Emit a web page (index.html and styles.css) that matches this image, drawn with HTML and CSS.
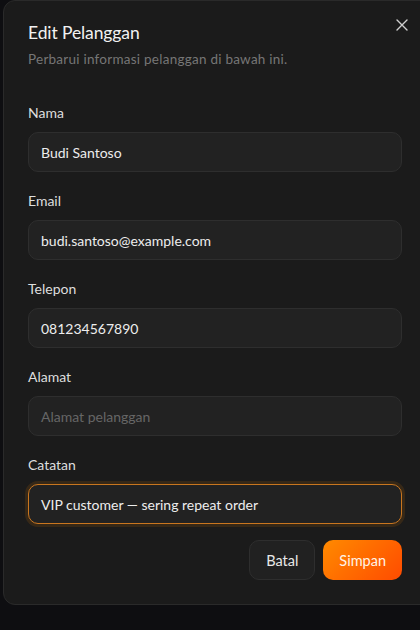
FILE: index.html
```html
<!DOCTYPE html>
<html lang="id">
<head>
<meta charset="utf-8">
<title>Edit Pelanggan</title>
<link rel="stylesheet" href="styles.css">
</head>
<body>
<div class="dialog">
  <button class="close" aria-label="Tutup">
    <svg width="12" height="12" viewBox="0 0 12 12"><path d="M1 1L11 11M11 1L1 11" stroke="#cfcfcf" stroke-width="1.4" stroke-linecap="round"/></svg>
  </button>
  <div class="header">
    <h2 class="title">Edit Pelanggan</h2>
    <p class="subtitle">Perbarui informasi pelanggan di bawah ini.</p>
  </div>
  <form class="form">
    <div class="field">
      <label class="label">Nama</label>
      <div class="input">Budi Santoso</div>
    </div>
    <div class="field">
      <label class="label">Email</label>
      <div class="input">budi.santoso@example.com</div>
    </div>
    <div class="field">
      <label class="label">Telepon</label>
      <div class="input">081234567890</div>
    </div>
    <div class="field">
      <label class="label">Alamat</label>
      <div class="input placeholder">Alamat pelanggan</div>
    </div>
    <div class="field">
      <label class="label">Catatan</label>
      <div class="input focused">VIP customer — sering repeat order</div>
    </div>
    <div class="actions">
      <button type="button" class="btn secondary">Batal</button>
      <button type="button" class="btn primary">Simpan</button>
    </div>
  </form>
</div>
</body>
</html>
```
FILE: styles.css
```css
html, body {
  margin: 0;
  padding: 0;
}
body {
  background: #0e0e11;
  width: 420px;
  height: 630px;
  overflow: hidden;
  font-family: "Lato", "Inter", sans-serif;
  color: #e6e6e6;
}
.dialog {
  position: relative;
  box-sizing: border-box;
  margin-left: 3px;
  width: 440px;
  height: 605px;
  background: #1b1b1b;
  border: 1px solid #2a2a2a;
  border-radius: 12px;
  padding: 20px 40px 24px 24px;
}
.close {
  position: absolute;
  top: 17px;
  right: 33px;
  width: 14px;
  height: 14px;
  padding: 0;
  border: 0;
  background: none;
  display: flex;
  align-items: center;
  justify-content: center;
}
.header {
  margin-bottom: 35px;
}
.title {
  margin: 0;
  font-size: 17.5px;
  line-height: 24px;
  font-weight: 400;
  letter-spacing: -0.1px;
  color: #f2f2f2;
}
.subtitle {
  margin: 5px 0 0;
  font-size: 13.5px;
  line-height: 18px;
  letter-spacing: 0.25px;
  color: #767676;
}
.form {
  display: flex;
  flex-direction: column;
  gap: 19px;
}
.field {
  display: flex;
  flex-direction: column;
  gap: 9px;
}
.label {
  font-size: 14px;
  line-height: 20px;
  color: #dedede;
}
.input {
  box-sizing: border-box;
  height: 40px;
  display: flex;
  align-items: center;
  padding: 0 12px;
  background: #222222;
  border: 1px solid #2e2e2e;
  border-radius: 10px;
  font-size: 14px;
  color: #ededed;
}
.input.placeholder {
  color: #666666;
}
.input.focused {
  border-color: #c9761f;
  box-shadow: 0 0 0 3px rgba(255, 136, 0, 0.12);
}
.actions {
  display: flex;
  justify-content: flex-end;
  gap: 8px;
  margin-top: -3px;
}
.btn {
  height: 40px;
  box-sizing: border-box;
  border-radius: 10px;
  font-family: inherit;
  font-size: 14.5px;
  padding: 0 16px;
}
.btn.secondary {
  background: #212121;
  border: 1px solid #2e2e2e;
  color: #e8e8e8;
}
.btn.primary {
  background: linear-gradient(135deg, #ff8a00, #ff4b00);
  border: 0;
  color: #fff3e6;
  padding: 0 16px;
}
```
